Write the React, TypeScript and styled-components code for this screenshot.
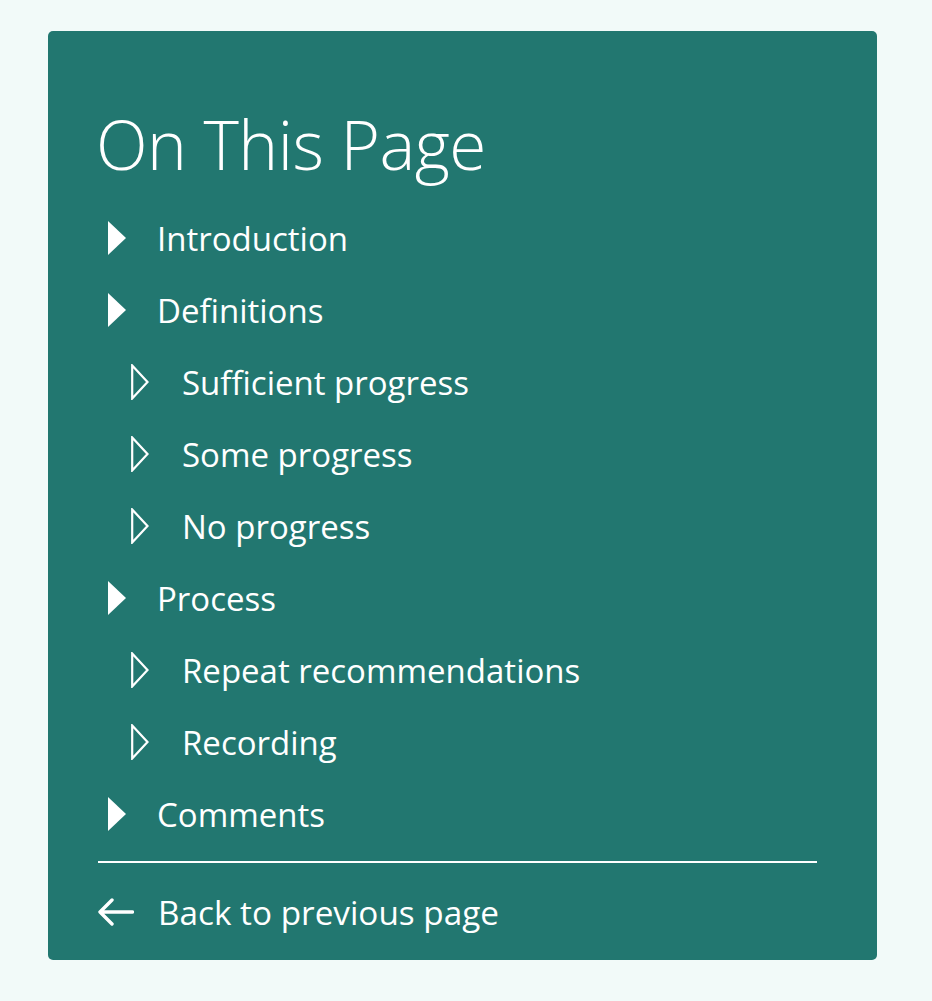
import React from "react";
import styled, { createGlobalStyle } from "styled-components";

const Global = createGlobalStyle`
  html, body { margin: 0; padding: 0; background: #f2faf9; }
  body { font-family: "Open Sans", "Noto Sans", sans-serif; }
`;

const Page = styled.div`
  padding: 31px 55px 41px 48px;
`;

const Panel = styled.nav`
  background: #227770;
  border-radius: 5px;
  padding: 77px 60px 15px 50px;
  color: #ffffff;
`;

const Heading = styled.h2`
  margin: 0 0 22px -2px;
  font-weight: 300;
  font-size: 67.5px;
  line-height: 72px;
  letter-spacing: -0.5px;
`;

const List = styled.ul`
  list-style: none;
  margin: 0;
  padding: 0;
`;

const Row = styled.li<{ $sub?: boolean }>`
  display: flex;
  align-items: center;
  height: 72px;
  padding-left: ${(p) => (p.$sub ? 33 : 10)}px;
  gap: ${(p) => (p.$sub ? 33 : 31)}px;
  font-size: 33px;
`;

const Divider = styled.hr`
  margin: 11px 0 0 0;
  border: 0;
  border-top: 2px solid #ffffff;
`;

const Back = styled.a`
  display: flex;
  align-items: center;
  gap: 24px;
  height: 66px;
  margin-top: 16px;
  color: #ffffff;
  text-decoration: none;
  font-size: 33.3px;
`;

const Tri = ({ hollow }: { hollow?: boolean }) =>
  hollow ? (
    <svg width="18" height="36" viewBox="0 0 18 36" aria-hidden>
      <path d="M1.2 1.5 L16.5 18 L1.2 34.5 Z" fill="none" stroke="#fff" strokeWidth="2.2" strokeLinejoin="miter" />
    </svg>
  ) : (
    <svg width="18" height="34" viewBox="0 0 18 34" aria-hidden>
      <path d="M0 0 L18 17 L0 34 Z" fill="#fff" />
    </svg>
  );

const Arrow = () => (
  <svg width="36" height="34" viewBox="0 0 36 34" aria-hidden>
    <path d="M34.5 17 H2.5 M14 5 L2 17 L14 29" fill="none" stroke="#fff" strokeWidth="3.4" strokeLinecap="round" strokeLinejoin="round" />
  </svg>
);

const items: { label: string; sub?: boolean }[] = [
  { label: "Introduction" },
  { label: "Definitions" },
  { label: "Sufficient progress", sub: true },
  { label: "Some progress", sub: true },
  { label: "No progress", sub: true },
  { label: "Process" },
  { label: "Repeat recommendations", sub: true },
  { label: "Recording", sub: true },
  { label: "Comments" },
];

export default function App() {
  return (
    <Page>
      <Global />
      <Panel>
        <Heading>On This Page</Heading>
        <List>
          {items.map((it) => (
            <Row key={it.label} $sub={it.sub}>
              <Tri hollow={it.sub} />
              <span>{it.label}</span>
            </Row>
          ))}
        </List>
        <Divider />
        <Back href="#">
          <Arrow />
          <span>Back to previous page</span>
        </Back>
      </Panel>
    </Page>
  );
}
